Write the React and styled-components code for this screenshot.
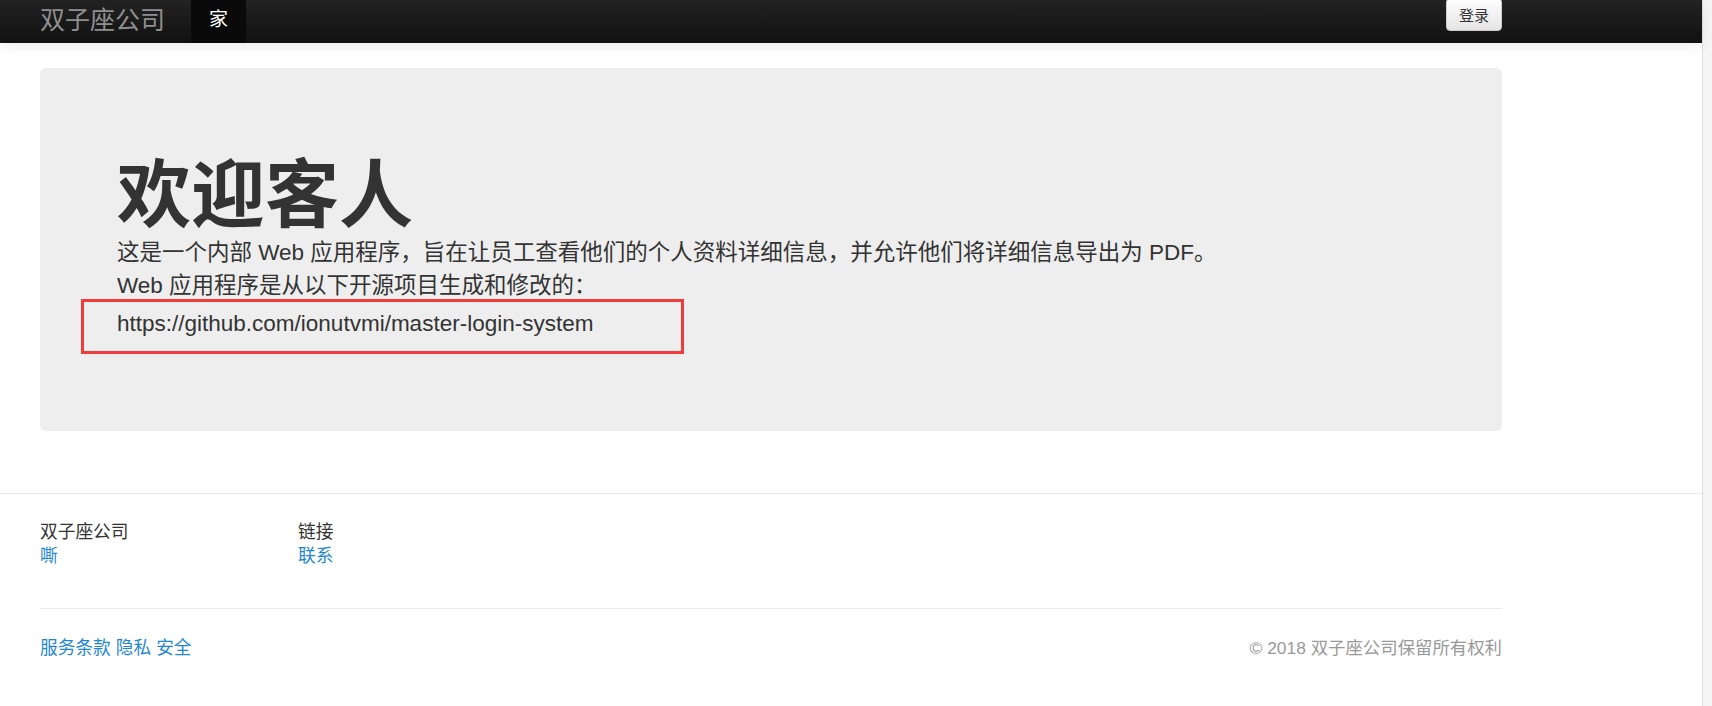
import React from "react";
import styled, { createGlobalStyle } from "styled-components";

const GlobalStyle = createGlobalStyle`
  html, body, #root {
    height: 100%;
  }
  body {
    margin: 0;
    background: #ffffff;
    color: #333333;
    font-family: "Liberation Sans", "Noto Sans CJK SC", sans-serif;
  }
`;

const Page = styled.div`
  display: flex;
  min-height: 100%;
`;

const Main = styled.div`
  flex: 1;
  min-width: 0;
`;

const Gutter = styled.div`
  width: 9px;
  flex-shrink: 0;
  background: #f5f5f5;
  border-left: 1px solid #e0e0e0;
`;

const Container = styled.div`
  width: 1462px;
  margin-left: 40px;
`;

const NavBar = styled.header`
  height: 43px;
  background: linear-gradient(#222222, #111111);
  box-shadow: 0 3px 12px rgba(0, 0, 0, 0.08);
  position: relative;
`;

const NavInner = styled(Container)`
  display: flex;
  align-items: flex-start;
  height: 43px;
`;

const Brand = styled.div`
  font-family: "Noto Sans CJK SC", sans-serif;
  font-size: 25px;
  line-height: 37px;
  color: #8f8f8f;
  margin-right: 26px;
`;

const NavItem = styled.div`
  font-family: "Noto Sans CJK SC", sans-serif;
  font-size: 19px;
  line-height: 36px;
  height: 43px;
  padding: 0 18px;
  box-sizing: border-box;
  color: ${(props) => (props.$active ? "#ffffff" : "#9d9d9d")};
  background: ${(props) => (props.$active ? "#0a0a0a" : "transparent")};
`;

const LoginButton = styled.button`
  margin-left: auto;
  margin-top: -2px;
  width: 56px;
  height: 33px;
  padding: 0;
  border: 1px solid #cccccc;
  border-radius: 4px;
  background: linear-gradient(#ffffff, #e4e4e4);
  color: #333333;
  font-family: "Noto Sans CJK SC", sans-serif;
  font-size: 15px;
  line-height: 31px;
`;

const Jumbotron = styled.section`
  margin-top: 25px;
  background: #eeeeee;
  border-radius: 6px;
  padding: 79px 0 77px 77px;
`;

const Title = styled.h1`
  margin: 0 0 6px;
  font-family: "Noto Sans CJK SC", sans-serif;
  font-size: 74px;
  line-height: 84px;
  font-weight: 700;
  color: #333333;
`;

const Lead = styled.p`
  margin: 0 0 1px;
  font-size: 22.5px;
  line-height: 32px;
  color: #333333;
`;

const LinkBox = styled.div`
  display: flex;
  align-items: center;
  box-sizing: border-box;
  width: 603px;
  height: 55px;
  margin: -4px 0 0 -36px;
  padding: 0 0 5px 33px;
  border: 3px solid #f23c3c;
  font-size: 22.5px;
  color: #333333;
`;

const Footer = styled.footer`
  margin-top: 62px;
`;

const Rule = styled.div`
  height: 1px;
  background: #eaeaea;
`;

const FooterCols = styled.div`
  display: grid;
  grid-template-columns: 258px 1fr;
  padding: 26px 0 40px;
`;

const FooterCol = styled.div`
  display: flex;
  flex-direction: column;
`;

const FooterText = styled.span`
  font-size: 17.7px;
  line-height: 24px;
  color: #333333;
`;

const Copyright = styled.span`
  font-size: 17.4px;
  line-height: 24px;
  color: #999999;
`;

const FooterLink = styled.a`
  font-size: 17.7px;
  line-height: 24px;
  color: #1f87d1;
  text-decoration: none;
`;

const FooterBottom = styled.div`
  display: flex;
  justify-content: space-between;
  padding-top: 27px;
`;

const LinkRow = styled.div`
  display: flex;
  gap: 5px;
`;

export default function App() {
  return (
    <>
      <GlobalStyle />
      <Page>
        <Main>
          <NavBar>
            <NavInner>
              <Brand>双子座公司</Brand>
              <NavItem $active>家</NavItem>
              <LoginButton>登录</LoginButton>
            </NavInner>
          </NavBar>

          <Container>
            <Jumbotron>
              <Title>欢迎客人</Title>
              <Lead>
                这是一个内部 Web 应用程序，旨在让员工查看他们的个人资料详细信息，并允许他们将详细信息导出为 PDF。
              </Lead>
              <Lead>Web 应用程序是从以下开源项目生成和修改的：</Lead>
              <LinkBox>https://github.com/ionutvmi/master-login-system</LinkBox>
            </Jumbotron>
          </Container>

          <Footer>
            <Rule />
            <Container>
              <FooterCols>
                <FooterCol>
                  <FooterText>双子座公司</FooterText>
                  <FooterLink href="#">嘶</FooterLink>
                </FooterCol>
                <FooterCol>
                  <FooterText>链接</FooterText>
                  <FooterLink href="#">联系</FooterLink>
                </FooterCol>
              </FooterCols>
              <Rule />
              <FooterBottom>
                <LinkRow>
                  <FooterLink href="#">服务条款</FooterLink>
                  <FooterLink href="#">隐私</FooterLink>
                  <FooterLink href="#">安全</FooterLink>
                </LinkRow>
                <Copyright>© 2018 双子座公司保留所有权利</Copyright>
              </FooterBottom>
            </Container>
          </Footer>
        </Main>
        <Gutter />
      </Page>
    </>
  );
}
